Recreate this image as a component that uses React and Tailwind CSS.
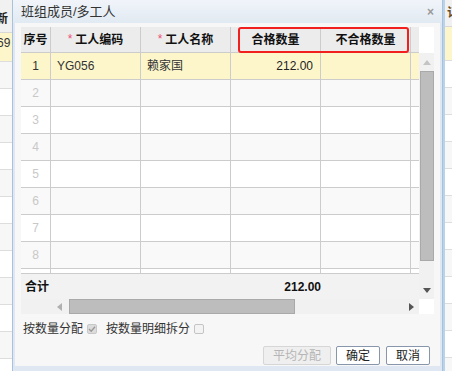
import React from 'react';

const cols = [
  { key: 'no', w: 30 },
  { key: 'code', w: 90, label: '工人编码', req: true },
  { key: 'name', w: 90, label: '工人名称', req: true },
  { key: 'ok', w: 90, label: '合格数量' },
  { key: 'bad', w: 90, label: '不合格数量' },
  { key: 'x', w: 90, label: '' },
];

const rows = [
  { no: 1, code: 'YG056', name: '赖家国', ok: '212.00' },
  { no: 2 }, { no: 3 }, { no: 4 }, { no: 5 }, { no: 6 }, { no: 7 }, { no: 8 }, { no: 9 },
];

function HeaderRow() {
  return (
    <div className="flex h-[26px] bg-[#ececec] border-b border-[#cccccc] shrink-0">
      {cols.map((c) => (
        <div
          key={c.key}
          style={{ width: c.w }}
          className="shrink-0 h-full border-r border-[#cccccc] flex items-center justify-center font-bold text-[12px] text-[#111]"
        >
          {c.key === 'no' ? '序号' : (
            <span className="flex items-center">
              {c.req && <span className="text-[#f0507a] text-[12px] mr-[3px] font-normal leading-none relative -top-[1px]">*</span>}
              {c.label}
            </span>
          )}
        </div>
      ))}
    </div>
  );
}

function BodyRow({ r }) {
  const selected = r.no === 1;
  const bg = selected ? 'bg-[#fdf6cb]' : r.no % 2 === 0 ? 'bg-[#f9f9f9]' : 'bg-white';
  return (
    <div className={`flex h-[27px] shrink-0 ${bg}`}>
      {cols.map((c) => (
        <div
          key={c.key}
          style={{ width: c.w }}
          className={`shrink-0 h-full border-r border-b border-[#cccccc] flex items-center text-[12px] ${
            c.key === 'no'
              ? `justify-center ${selected ? 'text-[#333]' : 'text-[#c8c8c8]'}`
              : c.key === 'ok'
              ? 'justify-end pr-[7px] text-[#222]'
              : 'pl-[6px] text-[#333]'
          }`}
        >
          {r[c.key] ?? ''}
        </div>
      ))}
    </div>
  );
}

function Tri({ dir, color }) {
  const pts = {
    up: '0,5 4,0 8,5',
    down: '0,0 8,0 4,5',
    left: '5,0 5,8 0,4',
    right: '0,0 0,8 5,4',
  }[dir];
  const vb = dir === 'up' || dir === 'down' ? '0 0 8 5' : '0 0 5 8';
  const w = dir === 'up' || dir === 'down' ? 8 : 5;
  const h = dir === 'up' || dir === 'down' ? 5 : 8;
  return (
    <svg width={w} height={h} viewBox={vb}>
      <polygon points={pts} fill={color} />
    </svg>
  );
}

function Grid() {
  return (
    <div className="relative w-[413px] h-[287px] shrink-0 flex bg-white">
      <div className="w-[398px] flex flex-col overflow-hidden">
        <HeaderRow />
        <div className="h-[220px] shrink-0 overflow-hidden flex flex-col">
          {rows.map((r) => (
            <BodyRow key={r.no} r={r} />
          ))}
        </div>
        <div className="h-[26px] shrink-0 border-t border-[#cccccc] bg-[#f2f2f2] flex items-center font-bold text-[12px] text-[#111]">
          <span className="pl-[4px] w-[120px]">合计</span>
          <span className="ml-auto mr-[98px]">212.00</span>
        </div>
        <div className="h-[15px] shrink-0 bg-[#f1f1f1] flex items-center">
          <div className="w-[30px]" />
          <div className="w-[17px] flex items-center justify-center">
            <Tri dir="left" color="#b0b0b0" />
          </div>
          <div className="w-[226px] h-[15px] ml-[1px] bg-[#bdbdbd] border border-[#a9a9a9]" />
          <div className="flex-1" />
          <div className="w-[16px] flex items-center justify-center">
            <Tri dir="right" color="#555" />
          </div>
        </div>
      </div>
      <div className="w-[15px] flex flex-col">
        <div className="h-[26px] shrink-0 bg-white" />
        <div className="h-[246px] shrink-0 bg-[#f1f1f1] flex flex-col items-center">
          <div className="h-[18px] flex items-center justify-center">
            <Tri dir="up" color="#c4c4c4" />
          </div>
          <div className="w-[14px] h-[190px] bg-[#bdbdbd] border border-[#a9a9a9]" />
          <div className="flex-1" />
          <div className="h-[18px] flex items-center justify-center">
            <Tri dir="down" color="#555" />
          </div>
        </div>
        <div className="h-[15px] shrink-0 bg-white" />
      </div>
      {/* highlight annotation */}
      <div className="absolute left-[217px] top-0 w-[171px] h-[26px] border-2 border-[#f21f1f] rounded-[3px] pointer-events-none" />
    </div>
  );
}

function LeftStrip() {
  return (
    <div className="w-[12px] shrink-0 flex flex-col overflow-hidden text-[12px]">
      <div className="h-[33px] shrink-0 bg-[#f1f1f1] border-b border-[#d8d8d8] flex items-end pb-[4px] font-bold text-[#222] whitespace-nowrap">
        <span className="-ml-[4px]">新</span>
      </div>
      <div className="h-[29px] shrink-0 bg-[#fdf6cb] border-b border-[#dddddd] flex items-start pt-[1px] whitespace-nowrap text-[#333]">
        <span className="-ml-[3px]">69</span>
      </div>
      {[0, 1, 2, 3, 4, 5, 6, 7, 8, 9, 10, 11].map((i) => (
        <div
          key={i}
          className={`h-[27px] shrink-0 border-b border-[#dddddd] ${i % 2 === 0 ? 'bg-[#f7f7f7]' : 'bg-white'}`}
        />
      ))}
    </div>
  );
}

function RightStrip() {
  return (
    <div className="w-[9px] shrink-0 flex flex-col overflow-hidden text-[12px] border-l-2 border-[#b9d3ec]">
      <div className="h-[27px] shrink-0 bg-[#f1f1f1] border-b border-[#d8d8d8] flex items-center pl-[2px] font-bold text-[#6b4a1e] whitespace-nowrap">
        订
      </div>
      <div className="h-[34px] shrink-0 bg-[#fdf6cb] border-b border-[#dddddd]" />
      {[0, 1, 2, 3, 4, 5, 6, 7, 8, 9, 10, 11].map((i) => (
        <div
          key={i}
          className={`h-[27px] shrink-0 border-b border-[#dddddd] ${i % 2 === 0 ? 'bg-white' : 'bg-[#f7f7f7]'}`}
        />
      ))}
    </div>
  );
}

export default function App() {
  return (
    <div
      className="w-[452px] h-[371px] overflow-hidden flex bg-white"
      style={{ fontFamily: '"Liberation Sans", "Noto Sans CJK SC", sans-serif' }}
    >
      <LeftStrip />
      <div className="w-[431px] shrink-0 h-full flex flex-col border-x border-[#a9c2dc] bg-[#dfe8f2]">
        <div className="h-[23px] shrink-0 bg-gradient-to-b from-[#f1f5fa] to-[#e1e9f2] flex items-center pl-[8px] pr-[8px]">
          <span className="text-[13px] text-[#333]">班组成员/多工人</span>
          <span className="ml-auto text-[#9a9a9a] font-bold text-[12px] leading-none">×</span>
        </div>
        <div className="h-[343px] shrink-0 mx-[2px] bg-[#f7f7f7] flex flex-col px-[6px] pt-[4px]">
          <Grid />
          <div className="flex items-center h-[18px] mt-[6px] text-[12px] text-[#333] pl-[2px]">
            <span>按数量分配</span>
            <span className="ml-[4px] w-[10px] h-[10px] rounded-[2px] bg-[#dcdcdc] border border-[#c8c8c8] flex items-center justify-center">
              <svg width="8" height="8" viewBox="0 0 8 8">
                <path d="M1 4 L3.2 6.2 L7 1.8" stroke="#9a9a9a" strokeWidth="1.4" fill="none" />
              </svg>
            </span>
            <span className="ml-[9px]">按数量明细拆分</span>
            <span className="ml-[4px] w-[10px] h-[10px] rounded-[2px] bg-[#f3f3f3] border border-[#c4c4c4]" />
          </div>
          <div className="flex justify-end items-center gap-[5px] mt-[8px] pr-[4px] text-[12px]">
            <button className="h-[19px] w-[68px] border border-[#d6d6d6] rounded-[2px] bg-[#efefef] text-[#b5b5b5]">
              平均分配
            </button>
            <button className="h-[19px] w-[44px] border border-[#8796ab] rounded-[2px] bg-white text-[#222]">
              确定
            </button>
            <button className="h-[19px] w-[44px] border border-[#8796ab] rounded-[2px] bg-white text-[#222] ml-[1px]">
              取消
            </button>
          </div>
        </div>
        <div className="flex-1 bg-[#dfe8f2]" />
      </div>
      <RightStrip />
    </div>
  );
}
